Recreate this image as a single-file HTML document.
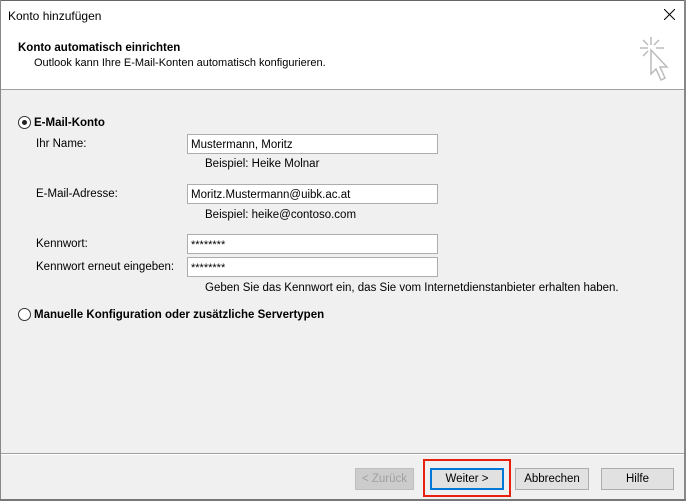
<!DOCTYPE html>
<html><head><meta charset="utf-8"><style>
*{margin:0;padding:0;box-sizing:border-box}
body{width:686px;height:501px;background:#fff;font-family:"Liberation Sans",sans-serif;font-size:11.5px;line-height:17px;color:#000;position:relative;overflow:hidden}
.a{position:absolute;white-space:nowrap}
.in{position:absolute;left:187px;width:251px;height:20px;background:#fff;border:1px solid #adadad;padding:3px 0 0 3px;line-height:14px}
.btn{position:absolute;top:468px;height:22px;background:#e1e1e1;border:1px solid #adadad;text-align:center;line-height:20px}
.rad{position:absolute;width:13px;height:13px;border:1px solid #333;border-radius:50%;background:#fff}
</style></head><body>
<div class="a" style="left:0;top:0;width:686px;height:1px;background:#666"></div>
<div class="a" style="left:0;top:0;width:1px;height:499px;background:#888"></div>
<div class="a" style="left:684px;top:0;width:2px;height:499px;background:#888"></div>
<div class="a" style="left:8px;top:8px;font-size:12px">Konto hinzufügen</div>
<svg class="a" style="left:664px;top:9px" width="11" height="11" viewBox="0 0 11 11" stroke="#000" stroke-width="1"><path d="M0 0L11 11M11 0L0 11"/></svg>
<div class="a" style="left:18px;top:40px;font-weight:bold">Konto automatisch einrichten</div>
<div class="a" style="left:34px;top:55px;font-size:11px">Outlook kann Ihre E-Mail-Konten automatisch konfigurieren.</div>
<svg class="a" style="left:636px;top:36px" width="36" height="50" viewBox="0 0 36 50" fill="none" stroke="#bbb" stroke-width="1.5">
<path d="M15 1v8M4 12h8M20 12h8M7 4l5 5M23 4l-5 5M7 20l5-5"/>
<path d="M15 14v24l5-5 5 11 4-2-5-11h7z" fill="#fff"/></svg>
<div class="a" style="left:1px;top:89px;width:683px;height:410px;background:#f0f0f0;border-top:1px solid #a0a0a0"></div>
<div class="rad" style="left:18px;top:116px"><div style="position:absolute;left:3px;top:3px;width:5px;height:5px;border-radius:50%;background:#222"></div></div>
<div class="a" style="left:34px;top:115px;font-weight:bold">E-Mail-Konto</div>
<div class="a" style="left:36px;top:136px">Ihr Name:</div>
<div class="in" style="top:134px">Mustermann, Moritz</div>
<div class="a" style="left:205px;top:156px">Beispiel: Heike Molnar</div>
<div class="a" style="left:36px;top:186px">E-Mail-Adresse:</div>
<div class="in" style="top:184px">Moritz.Mustermann@uibk.ac.at</div>
<div class="a" style="left:205px;top:207px">Beispiel: heike@contoso.com</div>
<div class="a" style="left:36px;top:236px">Kennwort:</div>
<div class="in" style="top:234px;font-size:11px">********</div>
<div class="a" style="left:36px;top:259px">Kennwort erneut eingeben:</div>
<div class="in" style="top:257px;font-size:11px">********</div>
<div class="a" style="left:205px;top:280px">Geben Sie das Kennwort ein, das Sie vom Internetdienstanbieter erhalten haben.</div>
<div class="rad" style="left:18px;top:308px"></div>
<div class="a" style="left:34px;top:307px;font-weight:bold">Manuelle Konfiguration oder zusätzliche Servertypen</div>
<div class="a" style="left:1px;top:453px;width:683px;height:1px;background:#a0a0a0"></div>
<div class="a" style="left:1px;top:454px;width:683px;height:1px;background:#fff"></div>
<div class="btn" style="left:355px;width:59px;color:#a0a0a0;background:#ccc;border-color:#bfbfbf">&lt; Zurück</div>
<div class="a" style="left:423px;top:459px;width:88px;height:38px;border:2px solid #e8210f"></div>
<div class="btn" style="left:430px;width:74px;border:2px solid #0078d7;line-height:18px">Weiter &gt;</div>
<div class="btn" style="left:515px;width:74px">Abbrechen</div>
<div class="btn" style="left:601px;width:73px">Hilfe</div>
<div class="a" style="left:0;top:499px;width:686px;height:2px;background:#777"></div>
</body></html>
